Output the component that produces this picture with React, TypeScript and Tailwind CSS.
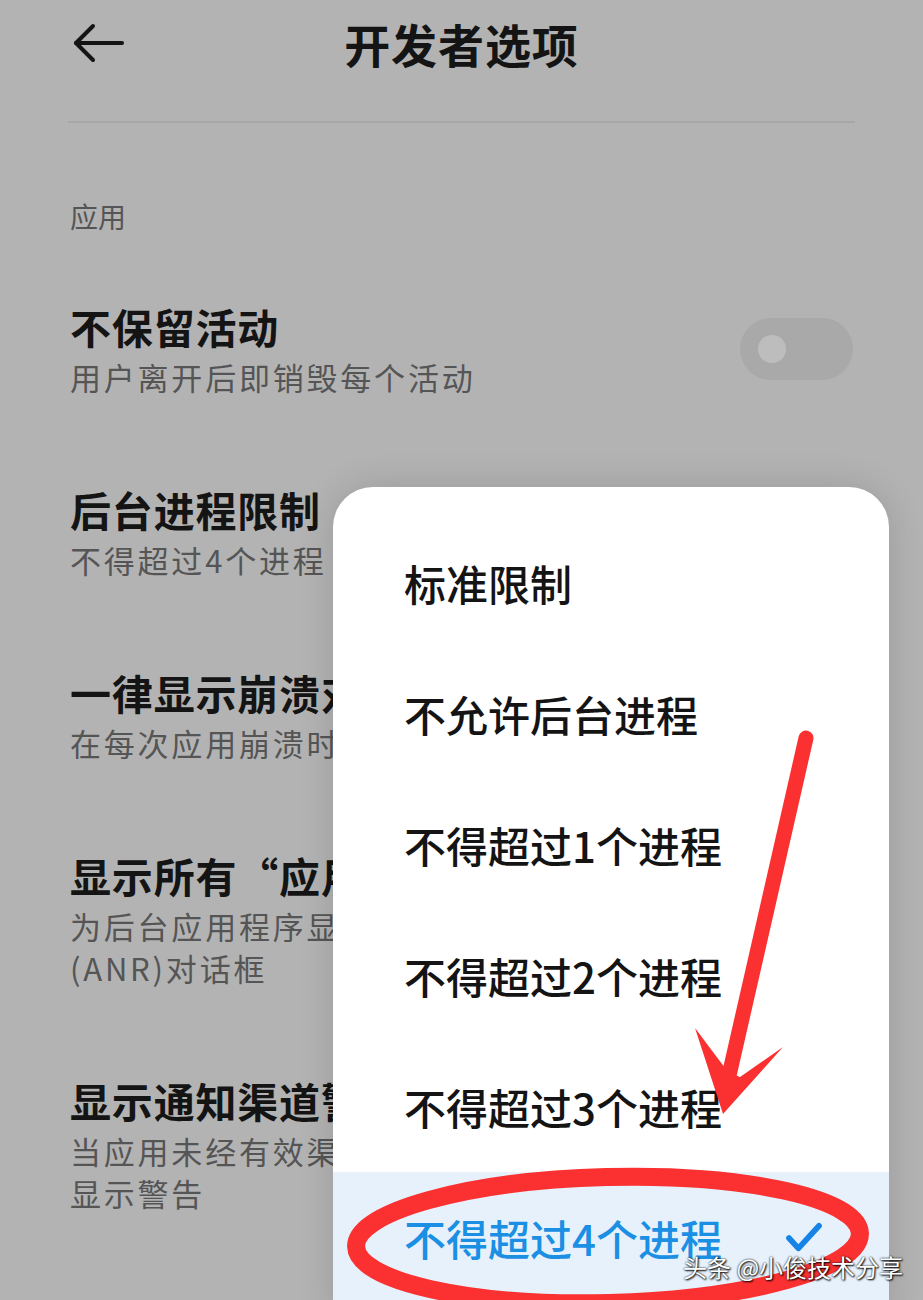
import React from 'react'

const font = { fontFamily: '"Noto Sans CJK SC", "Noto Sans", sans-serif' }

interface Pref {
  title: string
  lines: string[]
  toggle?: boolean
}

const prefs: Pref[] = [
  { title: '不保留活动', lines: ['用户离开后即销毁每个活动'], toggle: true },
  { title: '后台进程限制', lines: ['不得超过4个进程'] },
  { title: '一律显示崩溃对话框', lines: ['在每次应用崩溃时显示对话框'] },
  { title: '显示所有“应用程序无响应”对话框', lines: ['为后台应用程序显示应用无响应', '(ANR)对话框'] },
  { title: '显示通知渠道警告', lines: ['当应用未经有效渠道发布通知时，在屏', '显示警告'] },
]

const options = ['标准限制', '不允许后台进程', '不得超过1个进程', '不得超过2个进程', '不得超过3个进程', '不得超过4个进程']
const selected = 5

function BackArrow() {
  return (
    <svg width="52" height="40" viewBox="0 0 52 40" fill="none" stroke="#141414" strokeWidth={4} strokeLinecap="round" strokeLinejoin="round">
      <path d="M3 20h46" />
      <path d="M20 3L3 20l17 17" />
    </svg>
  )
}

function PrefRow({ pref }: { pref: Pref }) {
  return (
    <div className="flex items-center justify-between pl-[70px] pr-[70px] pt-[42px] pb-[43px]">
      {/* the dialog covers everything right of 333px, so clip there */}
      <div className={pref.toggle ? 'min-w-0 whitespace-nowrap' : 'max-w-[263px] overflow-hidden whitespace-nowrap'}>
        <div className="text-[41px] leading-[52px] font-bold text-[#141414] tracking-[0.02em]">{pref.title}</div>
        <div className="mt-[4px]">
          {pref.lines.map((l) => (
            <div key={l} className="text-[31px] leading-[42px] text-[#555555] tracking-[0.09em]">{l}</div>
          ))}
        </div>
      </div>
      {pref.toggle && (
        <div className="w-[113px] h-[62px] shrink-0 rounded-full bg-[#a9a9a9] flex items-center pl-[18px]">
          <div className="w-[28px] h-[28px] rounded-full bg-[#bdbdbd]" />
        </div>
      )}
    </div>
  )
}

function Menu() {
  return (
    <div className="absolute left-[333px] top-[487px] w-[556px] h-[830px] bg-white rounded-t-[40px] pt-[30px] shadow-[0_0_36px_rgba(0,0,0,0.14)] overflow-hidden">
      {options.map((o, i) => (
        <div
          key={o}
          className={
            i === selected
              ? 'h-[131px] flex items-center justify-between pl-[71px] pr-[66px] bg-[#e6f1fc]'
              : 'h-[131px] flex items-center pl-[71px]'
          }
        >
          <span className={i === selected ? 'text-[42px] font-medium text-[#1a8fe3]' : 'text-[42px] font-medium text-[#141414]'}>
            {o}
          </span>
          {i === selected && (
            <svg width="38" height="32" viewBox="0 0 40 34" fill="none" stroke="#1683e6" strokeWidth={6} strokeLinecap="round" strokeLinejoin="round">
              <path d="M4 17l10 11L36 4" />
            </svg>
          )}
        </div>
      ))}
    </div>
  )
}

// red markup drawn on top of the screen
function Markup() {
  return (
    <svg className="absolute inset-0 pointer-events-none" width="923" height="1300" viewBox="0 0 923 1300" fill="none">
      <path d="M806 738L728 1080" stroke="#fb3030" strokeWidth={15} strokeLinecap="round" />
      <path d="M695 1028L723 1114L783 1047L740 1077L728 1072Z" fill="#fb3030" />
      <ellipse cx="608" cy="1240" rx="252" ry="63" stroke="#fb3030" strokeWidth={18} transform="rotate(-1.5 608 1240)" />
    </svg>
  )
}

export default function App() {
  return (
    <div className="relative w-[923px] h-[1300px] overflow-hidden bg-[#b3b3b3]" style={font}>
      <div className="h-[86px] relative flex items-center pl-[73px]">
        <BackArrow />
        <div className="absolute inset-0 flex items-center justify-center pointer-events-none">
          <span className="text-[46px] font-bold text-[#141414] tracking-[0.02em]">开发者选项</span>
        </div>
      </div>
      <div className="mx-[68px] mt-[35px] h-[2px] bg-[#a7a7a7]" />
      <div className="mt-[75px] pl-[70px] text-[28px] leading-[36px] text-[#555555]">应用</div>
      <div className="mt-[24px]">
        {prefs.map((p) => (
          <PrefRow key={p.title} pref={p} />
        ))}
      </div>

      <Menu />
      <Markup />

      <div className="absolute left-[683px] top-[1250px] text-[24px] leading-[34px] text-white [text-shadow:0_0_2px_#000,1px_1px_2px_#000]">
        头条 @小俊技术分享
      </div>
    </div>
  )
}
